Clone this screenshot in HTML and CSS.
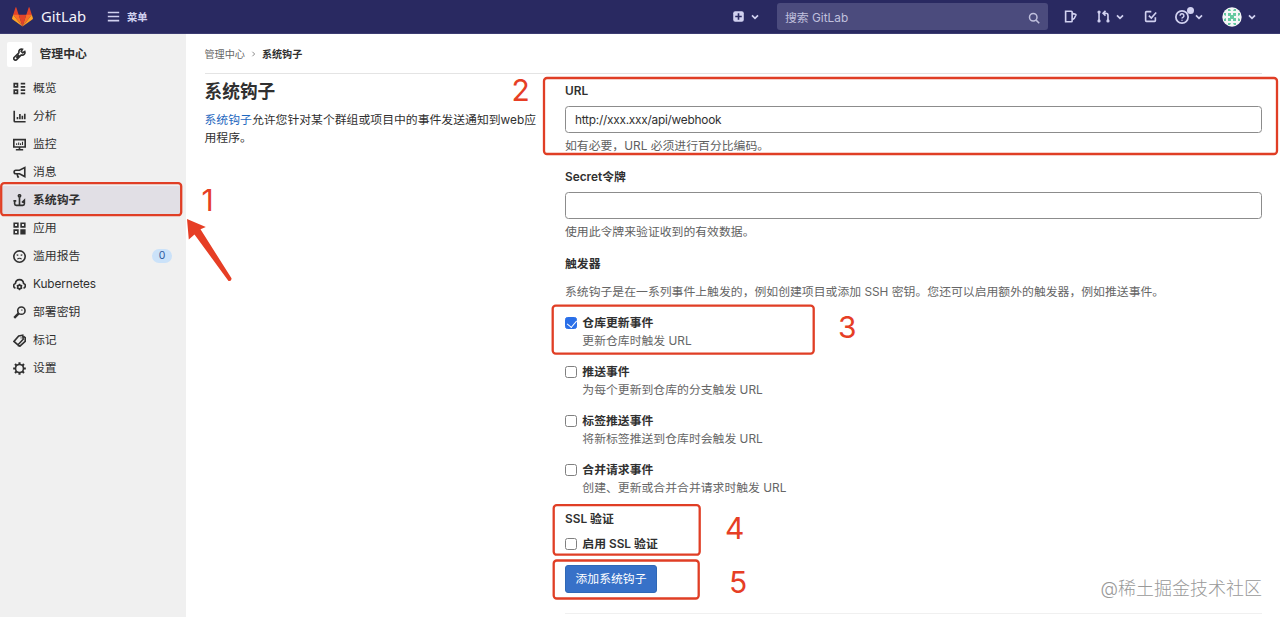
FILE: index.html
```html
<!DOCTYPE html>
<html lang="zh-CN">
<head>
    <meta charset="UTF-8">
    <meta name="viewport" content="width=device-width, initial-scale=1.0">
    <title>系统钩子 · 管理中心 · GitLab</title>
    <link rel="stylesheet" href="styles.css">
</head>
<body>

    <!-- Navbar -->
    <header class="navbar">
        <a class="brand">
            <svg class="logo" viewBox="0 0 36 34">
                <path d="M2 13l9.380 9v-9l-4-12.280c-.2-.630-1.180-.630-1.380 0zM34 13l-9.380 9v-9l4-12.280c.2-.630 1.180-.630 1.380 0zM18 33.380L11.380 13h13.240z" fill="#e24329"/>
                <path d="M18 33.380L11.380 13H2zM18 33.380L24.620 13H34z" fill="#fc6d26"/>
                <path d="M2 13L.1 19.160c-.18.560 0 1.200.5 1.560L18 33.380zM34 13l1.900 6.160c.18.560 0 1.200-.5 1.560L18 33.380z" fill="#fca326"/>
            </svg>
            <span>GitLab</span>
        </a>
        <a class="menu">
            <svg class="icon" viewBox="0 0 16 16"><path d="M1 3h14M1 8h14M1 13h14"/></svg>
            <span>菜单</span>
        </a>
        <div class="nav-right">
            <a class="nav-item new-item">
                <svg class="icon" viewBox="0 0 16 16"><rect x="1.500" y="1.500" width="13" height="13" rx="2.500" fill="#d1d1f0" stroke="none"/><path d="M8 4v8M4 8h8" stroke="#292961"/></svg>
                <svg class="caret" viewBox="0 0 8 6"><path d="M1 1.300l3 3 3-3"/></svg>
            </a>
            <div class="search">
                <span>搜索 GitLab</span>
                <svg class="icon" viewBox="0 0 16 16"><circle cx="7" cy="7" r="5"/><path d="M10.800 10.800L15 15"/></svg>
            </div>
            <a class="nav-item issues">
                <svg class="icon" viewBox="0 0 16 16"><path d="M2 1.500h7a1 1 0 0 1 1 1v11a1 1 0 0 1-1 1H2zM10 4l4 1.300c.6.200.8.700.6 1.200L12.500 10.500 10 12"/></svg>
            </a>
            <a class="nav-item merges">
                <svg class="icon" viewBox="0 0 16 16"><path d="M2.500 3v10M8.500 4h2.500a2.500 2.500 0 0 1 2.500 2.500V13M10.500 1L7.500 4l3 3"/><circle cx="2.500" cy="2.500" r="1"/><circle cx="2.500" cy="13.500" r="1"/><circle cx="13.500" cy="13.500" r="1"/></svg>
                <svg class="caret" viewBox="0 0 8 6"><path d="M1 1.300l3 3 3-3"/></svg>
            </a>
            <a class="nav-item todos">
                <svg class="icon" viewBox="0 0 16 16"><path d="M9 2H3a1 1 0 0 0-1 1v10a1 1 0 0 0 1 1h10a1 1 0 0 0 1-1V9M6 7l3 3 6-7"/></svg>
            </a>
            <a class="nav-item help">
                <svg class="icon" viewBox="0 0 16 16"><circle cx="8" cy="8" r="7"/><path d="M5.800 6.500a2.200 2.200 0 1 1 3.300 1.900c-.8.400-1.100.700-1.100 1.400M8 11v1.400" stroke-width="1.700"/></svg>
                <span class="dot"></span>
                <svg class="caret" viewBox="0 0 8 6"><path d="M1 1.300l3 3 3-3"/></svg>
            </a>
            <a class="nav-item user">
                <svg class="avatar" viewBox="0 0 20 20">
                    <circle cx="10" cy="10" r="9.700" fill="#f4f6f6"/>
                    <path d="M6 6h3v2h2V6h3v3h-2v2h2v3h-3v-2H9v2H6v-3h2V9H6zM6 2h2l1 2H6zM12 2h2v2h-3zM6 16h3l-1 2H6zM11 16h3v2h-2zM2 6l2 0v3l-2-1zM16 6h2v2l-2 1zM2 12l2-1v3H2zM16 11l2 1v2h-2z" fill="#65c9a0"/>
                </svg>
                <svg class="caret" viewBox="0 0 8 6"><path d="M1 1.300l3 3 3-3"/></svg>
            </a>
        </div>
    </header>

    <div class="layout">

        <!-- Sidebar -->
        <nav class="sidebar">
            <div class="context">
                <span class="context-icon">
                    <svg class="icon" viewBox="0 0 16 16"><path d="M14.500 4.300l-2.700 1.500-1.700-1.700 1.600-2.600C9.300.600 6.700 2.500 7.300 5.800L1.600 11.400a2 2 0 0 0 2.900 2.900l5.700-5.700c3.200.700 5.200-1.900 4.300-4.300zM4 12l3.500-3.500"/></svg>
                </span>
                <span>管理中心</span>
            </div>
            <ul class="side-list">
                <li class="side-item">
                    <svg class="icon" viewBox="0 0 16 16"><path d="M1.500 2h4v4h-4zM1.500 10h4v4h-4zM9.500 2H15M9.500 6H15M9.500 10H15M9.500 14H15"/></svg>
                    <span>概览</span>
                </li>
                <li class="side-item">
                    <svg class="icon" viewBox="0 0 16 16"><path d="M1.500 1v12.500a1 1 0 0 0 1 1H15.500M5.500 8.500v3M8.500 5v6.500M11.500 7v4.500M14.500 4.500v7"/></svg>
                    <span>分析</span>
                </li>
                <li class="side-item">
                    <svg class="icon" viewBox="0 0 16 16"><path d="M1 2h14v9H1zM8 11v3M3.500 14.500h9"/><path d="M4.500 6.500v2M7 5.500v3M9.300 6.500v2M11.700 4.500v4" stroke-width="1.300"/></svg>
                    <span>监控</span>
                </li>
                <li class="side-item">
                    <svg class="icon" viewBox="0 0 16 16"><path d="M14.500 2v11L8 9.500H3.500a2 2 0 0 1 0-4.300H8zM5 9.500l1 4h1.500"/></svg>
                    <span>消息</span>
                </li>
                <li class="side-item active">
                    <svg class="icon" viewBox="0 0 16 16"><circle cx="8" cy="2.300" r="1.400"/><path d="M8 4v10M.500 8.500h3.500M2 8.500V12a2 2 0 0 0 2 2h8a2 2 0 0 0 2-2V7.500L11 10.500"/></svg>
                    <span>系统钩子</span>
                </li>
                <li class="side-item">
                    <svg class="icon" viewBox="0 0 16 16"><path d="M1.500 1.500h4.500v4.500H1.500zM10 1.500h4.500v4.500H10zM1.500 10h4.500v4.500H1.500z"/><path d="M10 10h4.500v4.500H10z" fill="#303030"/></svg>
                    <span>应用</span>
                </li>
                <li class="side-item">
                    <svg class="icon" viewBox="0 0 16 16"><circle cx="8" cy="8" r="7"/><path d="M4.500 5.800l2 .8M11.500 5.800l-2 .8M5.500 11.500c1-1.800 4-1.800 5 0" stroke-width="1.400"/></svg>
                    <span>滥用报告</span>
                    <span class="badge">0</span>
                </li>
                <li class="side-item">
                    <svg class="icon" viewBox="0 0 16 16"><path d="M3 12.500A3 3 0 0 1 3 6.700C3.300 3.800 5.500 2 8 2s4.700 1.800 5 4.700a3 3 0 0 1 0 5.800"/><circle cx="8" cy="11" r="2.300"/><path d="M8 7v2M8 13v2M4.700 9l1.600 1M9.700 12l1.600 1M11.300 9l-1.600 1M6.300 12l-1.600 1" stroke-width="1.500"/></svg>
                    <span class="latin">Kubernetes</span>
                </li>
                <li class="side-item">
                    <svg class="icon" viewBox="0 0 16 16"><circle cx="10.300" cy="5.700" r="4.500"/><path d="M7 9l-5.500 5.500" stroke-width="3"/><path d="M10.500 4.500l1 1" stroke-width="1.500"/></svg>
                    <span>部署密钥</span>
                </li>
                <li class="side-item">
                    <svg class="icon" viewBox="0 0 16 16"><path d="M7 2.500l5-1 .5 5-6.500 7L1.200 9.200zM13 3l2 1.500v4.500l-6.500 6-2.500-1M9.500 4.800h.8"/></svg>
                    <span>标记</span>
                </li>
                <li class="side-item">
                    <svg class="icon" viewBox="0 0 16 16"><circle cx="8" cy="8" r="4.900"/><path d="M8 .200v3M8 12.800v3M.200 8h3M12.800 8h3M2.500 2.500l2 2M11.500 11.500l2 2M2.500 13.500l2-2M11.500 4.500l2-2" stroke-width="2.600"/></svg>
                    <span>设置</span>
                </li>
            </ul>
        </nav>

        <!-- Content -->
        <main class="content">
            <div class="breadcrumbs">
                <span>管理中心</span>
                <svg class="chevron" viewBox="0 0 6 8"><path d="M1.500 1l3 3-3 3"/></svg>
                <strong>系统钩子</strong>
            </div>

            <div class="columns">
                <section class="intro">
                    <h1>系统钩子</h1>
                    <p><a>系统钩子</a>允许您针对某个群组或项目中的事件发送通知到web应用程序。</p>
                </section>

                <form class="hook-form">
                    <div class="field">
                        <label for="url">URL</label>
                        <input class="text-input" id="url" type="text" value="http://xxx.xxx/api/webhook">
                        <p>如有必要，URL 必须进行百分比编码。</p>
                    </div>
                    <div class="field">
                        <label for="token">Secret令牌</label>
                        <input class="text-input" id="token" type="text">
                        <p>使用此令牌来验证收到的有效数据。</p>
                    </div>
                    <div class="triggers">
                        <h2>触发器</h2>
                        <p class="note">系统钩子是在一系列事件上触发的，例如创建项目或添加 SSH 密钥。您还可以启用额外的触发器，例如推送事件。</p>
                        <label class="check">
                            <input type="checkbox" checked>
                            <span class="check-text"><strong>仓库更新事件</strong><span>更新仓库时触发 URL</span></span>
                        </label>
                        <label class="check">
                            <input type="checkbox">
                            <span class="check-text"><strong>推送事件</strong><span>为每个更新到仓库的分支触发 URL</span></span>
                        </label>
                        <label class="check">
                            <input type="checkbox">
                            <span class="check-text"><strong>标签推送事件</strong><span>将新标签推送到仓库时会触发 URL</span></span>
                        </label>
                        <label class="check">
                            <input type="checkbox">
                            <span class="check-text"><strong>合并请求事件</strong><span>创建、更新或合并合并请求时触发 URL</span></span>
                        </label>
                    </div>
                    <div class="ssl">
                        <h2>SSL 验证</h2>
                        <label class="check">
                            <input type="checkbox">
                            <span class="check-text"><strong>启用 SSL 验证</strong></span>
                        </label>
                    </div>
                    <button class="button" type="button">添加系统钩子</button>
                    <hr>
                </form>
            </div>
        </main>
    </div>

    <!-- Numbered steps drawn over the page -->
    <svg class="steps" viewBox="0 0 1280 617">
        <rect x="1.200" y="183.200" width="180" height="32" rx="3"/>
        <rect x="544" y="78" width="733" height="76" rx="3"/>
        <rect x="552.700" y="305.600" width="261" height="48" rx="3"/>
        <rect x="553.700" y="505.200" width="146" height="49.500" rx="3"/>
        <rect x="553.700" y="560.500" width="145" height="38" rx="3"/>
        <path d="M187 219l18.800 8-5.300 2.300 31 49q.3 3.300-3 2.700L194.500 234.500l-5.700 5z"/>
        <text x="201.500" y="211">1</text>
        <text x="511.500" y="101">2</text>
        <text x="838" y="338">3</text>
        <text x="725" y="538.500">4</text>
        <text x="729" y="592.500">5</text>
    </svg>
    <div class="watermark">@稀土掘金技术社区</div>

</body>
</html>
```
FILE: styles.css
```css
* {
    box-sizing: border-box;
}
body {
    margin: 0;
    height: 617px;
    overflow: hidden;
    background-color: #fff;
    color: #303030;
    font-family: Inter, "Noto Sans CJK SC", sans-serif;
    font-size: 11.85px;
    line-height: 18px;
}
h1, h2, p, ul {
    margin: 0;
    padding: 0;
}
svg {
    display: block;
    flex: none;
    fill: none;
    stroke: currentColor;
    stroke-width: 2;
}
strong {
    font-weight: 600;
}

/* Navbar */
.navbar {
    display: flex;
    align-items: center;
    height: 34px;
    padding: 0 24px 0 12px;
    background-color: #292961;
    border-bottom: 1px solid #3c3c72;
    color: #d1d1f0;
}
.brand {
    display: flex;
    align-items: center;
    gap: 8px;
    width: 95px;
    color: #f2f2fa;
    font-family: "Noto Sans", sans-serif;
    font-size: 14.8px;
}
.brand span {
    padding-bottom: 2px;
}
.logo {
    width: 21px;
    height: 20px;
    stroke: none;
}
.icon {
    width: 13px;
    height: 13px;
}
.menu {
    display: flex;
    align-items: center;
    gap: 7px;
    font-size: 10.3px;
    font-weight: 700;
}
.nav-right {
    display: flex;
    align-items: center;
    margin-left: auto;
}
.nav-item {
    display: flex;
    align-items: center;
    gap: 6px;
}
.caret {
    width: 8px;
    height: 6px;
    stroke-width: 1.7;
}
.search {
    display: flex;
    align-items: center;
    justify-content: space-between;
    width: 271px;
    height: 27px;
    margin: 0 16px 0 18px;
    padding: 2px 8px 0;
    border-radius: 3px;
    background-color: #4b4b7d;
    color: #c0c0dd;
}
.search .icon {
    width: 12px;
    height: 12px;
}
.merges {
    margin-left: 20px;
}
.todos {
    margin-left: 20px;
}
.help {
    position: relative;
    margin-left: 18px;
}
.help .icon {
    width: 14px;
    height: 14px;
}
.dot {
    position: absolute;
    top: -3px;
    left: 12px;
    width: 7px;
    height: 7px;
    border-radius: 50%;
    background-color: #d1d1f0;
}
.user {
    margin-left: 19px;
}
.avatar {
    width: 20px;
    height: 20px;
    stroke: none;
}

/* Sidebar */
.layout {
    display: flex;
    height: 583px;
}
.sidebar {
    width: 186px;
    padding-top: 8px;
    background-color: #f0f0f0;
}
.context {
    display: flex;
    align-items: center;
    gap: 7.5px;
    height: 24px;
    margin-bottom: 8px;
    padding-left: 7px;
    font-weight: 600;
}
.context-icon {
    display: flex;
    align-items: center;
    justify-content: center;
    width: 25px;
    height: 25px;
    background-color: #fff;
    border-radius: 2px;
}
.side-list {
    list-style: none;
}
.side-item {
    display: flex;
    align-items: center;
    gap: 7px;
    height: 28px;
    padding: 0 14px 0 13px;
}
.side-item.active {
    margin: 0 4px 0 2px;
    padding-left: 11px;
    background-color: #e1dfe5;
    font-weight: 600;
}
.latin {
    letter-spacing: -0.12px;
}
.badge {
    margin-left: auto;
    width: 20px;
    height: 14px;
    border-radius: 7px;
    background-color: #cbe2f9;
    color: #2f5ca0;
    font-size: 10.5px;
    line-height: 14px;
    text-align: center;
}

/* Content */
.content {
    flex: 1;
    padding: 0 18px 0 18.5px;
}
.breadcrumbs {
    display: flex;
    align-items: center;
    gap: 6px;
    height: 40px;
    border-bottom: 1px solid #e4e4e4;
    color: #666;
    font-size: 10.1px;
}
.breadcrumbs strong {
    color: #303030;
}
.chevron {
    width: 5px;
    height: 6px;
    stroke-width: 1;
}
.columns {
    display: grid;
    grid-template-columns: 334px 1fr;
    column-gap: 26.5px;
}
.intro h1 {
    margin: 6px 0 7px;
    font-size: 17.7px;
    font-weight: 600;
    line-height: 24px;
}
.intro a {
    color: #1f68c0;
}
.hook-form {
    padding-top: 7.8px;
}
.field {
    height: 86.5px;
}
.field label, .hook-form h2 {
    display: block;
    font-size: 11.85px;
    font-weight: 600;
    line-height: 18px;
}
.field p {
    margin-top: 4px;
    color: #606060;
}
.text-input {
    display: block;
    width: 100%;
    height: 27px;
    margin-top: 6px;
    padding: 1px 9px 0;
    border: 1px solid #8c8c8c;
    border-radius: 3.5px;
    color: #303030;
    font: inherit;
    letter-spacing: -0.24px;
}
.triggers .note {
    margin: 10px 0 13px;
    color: #666;
}
.check {
    display: flex;
    gap: 5.3px;
    margin-bottom: 13px;
}
.check input {
    appearance: none;
    flex: none;
    width: 12px;
    height: 12px;
    margin: 3px 0 0;
    border: 1px solid #808080;
    border-radius: 2.5px;
}
.check input:checked {
    position: relative;
    border-color: #2a6fe8;
    background-color: #2a6fe8;
}
.check input:checked::after {
    content: "";
    position: absolute;
    top: 0;
    left: 3px;
    width: 4.5px;
    height: 8px;
    border: solid #fff;
    border-width: 0 1.5px 1.5px 0;
    transform: rotate(40deg);
}
.check-text {
    display: flex;
    flex-direction: column;
    color: #666;
}
.check-text strong {
    color: #303030;
}
.ssl .check {
    margin: 7px 0 12px;
}
.button {
    display: block;
    width: 92px;
    height: 28px;
    padding: 0;
    border: 1px solid #2f68b5;
    border-radius: 3px;
    background-color: #3771c8;
    color: #fff;
    font: inherit;
}
hr {
    margin: 20px 0 0;
    border: none;
    border-top: 1px solid #f0f0f0;
}

/* Steps and watermark */
.steps {
    position: absolute;
    top: 0;
    left: 0;
    width: 1280px;
    height: 617px;
}
.steps rect {
    stroke: #e03e25;
    stroke-width: 2.3;
}
.steps path, .steps text {
    fill: #e63e25;
    stroke: none;
}
.steps text {
    font-size: 30px;
    font-weight: 400;
}
.watermark {
    position: absolute;
    right: 18px;
    bottom: 15px;
    color: #999;
    font-size: 18px;
    font-weight: 300;
    line-height: 26px;
}
```
